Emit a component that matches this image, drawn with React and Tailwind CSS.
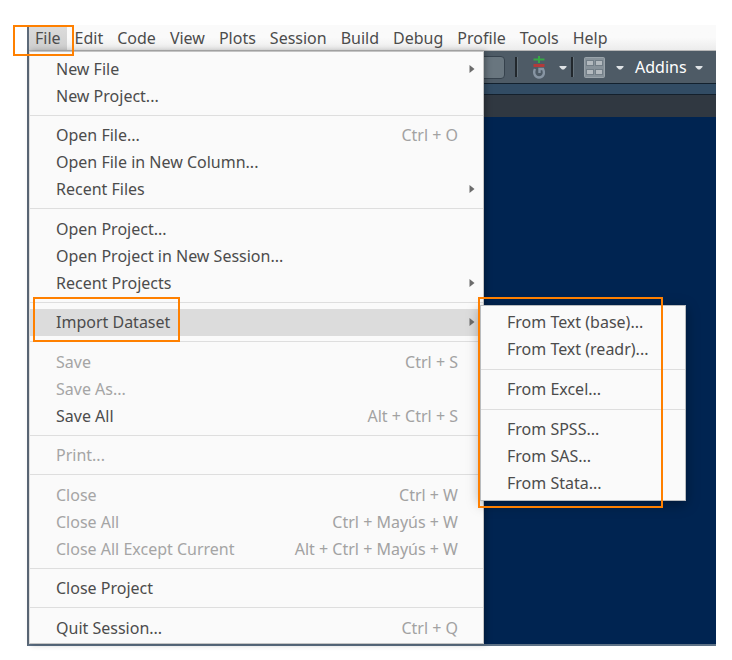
import React from "react";

const MENUS = ["File", "Edit", "Code", "View", "Plots", "Session", "Build", "Debug", "Profile", "Tools", "Help"];

const FILE_GROUPS = [
  [{ label: "New File", sub: true }, { label: "New Project..." }],
  [
    { label: "Open File...", keys: "Ctrl + O" },
    { label: "Open File in New Column..." },
    { label: "Recent Files", sub: true },
  ],
  [
    { label: "Open Project..." },
    { label: "Open Project in New Session..." },
    { label: "Recent Projects", sub: true },
  ],
  [{ label: "Import Dataset", sub: true, open: true }],
  [
    { label: "Save", keys: "Ctrl + S", off: true },
    { label: "Save As...", off: true },
    { label: "Save All", keys: "Alt + Ctrl + S" },
  ],
  [{ label: "Print...", off: true }],
  [
    { label: "Close", keys: "Ctrl + W", off: true },
    { label: "Close All", keys: "Ctrl + Mayús + W", off: true },
    { label: "Close All Except Current", keys: "Alt + Ctrl + Mayús + W", off: true },
  ],
  [{ label: "Close Project" }],
  [{ label: "Quit Session...", keys: "Ctrl + Q" }],
];

const IMPORT_GROUPS = [
  ["From Text (base)...", "From Text (readr)..."],
  ["From Excel..."],
  ["From SPSS...", "From SAS...", "From Stata..."],
];

function Marker({ className }) {
  return <span aria-hidden="true" className={`pointer-events-none absolute z-30 border-2 border-[#ff8000] ${className}`} />;
}

function Caret() {
  return (
    <svg viewBox="0 0 8 4" className="mt-0.5 h-1 w-2 shrink-0" aria-hidden="true">
      <path d="M0.5 0H7.5V1L5 3.5H3L0.5 1Z" fill="#dfe3e6" />
    </svg>
  );
}

function Divider() {
  return <span className="h-5 w-[3px] shrink-0 border-l-2 border-[#22282d] border-r border-r-[#65727b]" />;
}

function ImportMenu() {
  return (
    <div
      role="menu"
      aria-label="Import Dataset"
      className="absolute -top-1 left-[calc(100%-3px)] z-20 w-[206px] border border-[#b9bcbf] bg-[#fafafa] py-[3px] shadow-[0_3px_12px_rgba(0,0,0,0.35)]"
    >
      {IMPORT_GROUPS.map((group, i) => (
        <React.Fragment key={group[0]}>
          {i > 0 && <hr className="my-1.5 border-[#dedede]" />}
          {group.map((label) => (
            <button key={label} role="menuitem" className="flex h-[27px] w-full items-center pl-[26px] whitespace-nowrap">
              {label}
            </button>
          ))}
        </React.Fragment>
      ))}
      <Marker className="-top-[9px] -bottom-2 -left-[3px] right-[22px]" />
    </div>
  );
}

function Item({ item }) {
  return (
    <div className="relative">
      <button
        role="menuitem"
        disabled={item.off}
        aria-haspopup={item.sub ? "menu" : undefined}
        className={`flex h-[27px] w-full items-center justify-between pl-[26px] whitespace-nowrap ${
          item.sub ? "pr-2" : "pr-[25px]"
        } ${item.off ? "text-[#a5a5a5]" : ""} ${item.open ? "bg-[#dcdcdc]" : ""}`}
      >
        <span>{item.label}</span>
        {item.keys && <span className="text-[#a2a2a2]">{item.keys}</span>}
        {item.sub && (
          <svg viewBox="0 0 6 8" className="h-2 w-1.5" aria-hidden="true">
            <path d="M0.5 0L5.5 4L0.5 8Z" fill="#6c6c6c" />
          </svg>
        )}
      </button>
      {item.open && (
        <>
          <ImportMenu />
          <Marker className="-top-3 left-[3px] h-[45px] w-[147px]" />
        </>
      )}
    </div>
  );
}

function FileMenu() {
  return (
    <div
      role="menu"
      aria-label="File"
      className="absolute top-0 bottom-0 left-0 z-10 flex w-[455px] flex-col justify-between border border-t-[#c4c4c4] border-r-[#c4c4c4] border-b-[#c4c4c4] border-l-[#dddddd] bg-[#fafafa] pt-[3px] pb-0.5 shadow-[2px_0_6px_rgba(0,0,0,0.3)]"
    >
      {FILE_GROUPS.map((group, i) => (
        <React.Fragment key={group[0].label}>
          {i > 0 && <hr className="border-[#dedede]" />}
          <div>
            {group.map((item) => (
              <Item key={item.label} item={item} />
            ))}
          </div>
        </React.Fragment>
      ))}
    </div>
  );
}

export default function App() {
  return (
    <div className="flex min-h-screen flex-col bg-white pt-[25px] pr-4 pb-3.5 pl-[27px] font-['Noto_Sans','Open_Sans',sans-serif] text-base text-[#4c4c4c]">
      <div className="flex grow flex-col border-b-2 border-l-2 border-b-[#5d7186] border-l-[#5d6a79] bg-[#002451]">
        <nav className="relative flex h-[26px] shrink-0 gap-0.5 border-b border-[#b8b8b8] bg-linear-to-b from-[#fafafa] from-50% to-[#ececec]">
          {MENUS.map((name) => (
            <button
              key={name}
              className={`relative px-1.5 whitespace-nowrap ${name === "File" ? "bg-linear-to-b from-[#dcdcdc] to-[#cfcfcf]" : ""}`}
            >
              {name}
              {name === "File" && <Marker className="top-0 -right-[7px] -bottom-1.5 -left-4" />}
            </button>
          ))}
        </nav>
        <div className="relative flex grow flex-col">
          <FileMenu />
          <div className="flex h-[33px] shrink-0 items-center border-b border-[#13212e] bg-[#4e5b66] pl-[400px] text-white">
            <input
              aria-label="Go to file or function"
              className="h-[23px] w-[76px] shrink-0 rounded-sm border border-[#36424d] bg-[#69767f]"
            />
            <div className="flex grow items-center pl-2.5">
              <Divider />
              <button aria-label="Version control" className="ml-[15px] flex items-center gap-3.5">
                <svg viewBox="0 0 12 24" className="h-6 w-3" aria-hidden="true">
                  <path d="M6 1V8M0.500 4.500H11.500" stroke="#37a846" strokeWidth="2" />
                  <path d="M0.500 10.500H11.500" stroke="#b23a3a" strokeWidth="3" />
                  <path d="M2 14C0 18 2 22.500 6 22.500C10.500 22.500 12 18 10 14H6.500V18" fill="none" stroke="#8795a3" strokeWidth="2.400" />
                </svg>
                <Caret />
              </button>
              <span className="ml-1 flex">
                <Divider />
              </span>
              <button aria-label="Panes" className="ml-2.5 flex items-center gap-[11px]">
                <svg viewBox="0 0 21 21" className="size-[21px]" aria-hidden="true">
                  <rect x="0.500" y="0.500" width="20" height="20" rx="1" fill="#87929a" stroke="#9aa4ab" />
                  <g fill="#b3babf" stroke="#727e87">
                    <rect x="2.500" y="3.500" width="7" height="5" />
                    <rect x="11.500" y="3.500" width="7" height="5" />
                    <rect x="2.500" y="12.500" width="7" height="5" />
                    <rect x="11.500" y="12.500" width="7" height="5" />
                  </g>
                </svg>
                <Caret />
              </button>
              <button className="ml-[11px] flex items-center gap-2">
                Addins
                <Caret />
              </button>
            </div>
          </div>
          <div className="h-[11px] shrink-0 border-b border-[#14202c] bg-[#324c64]" />
          <div className="h-[22px] shrink-0 bg-[#303841]" />
        </div>
      </div>
    </div>
  );
}
